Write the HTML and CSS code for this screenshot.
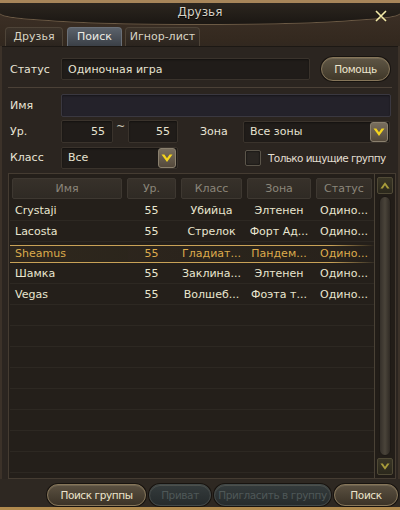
FILE: index.html
```html
<!DOCTYPE html>
<html lang="ru">
<head>
    <meta charset="UTF-8">
    <title>Друзья</title>
    <link rel="stylesheet" href="styles.css">
</head>
<body>
    <div class="window">
        <div class="titlebar"><span class="title">Друзья</span></div>
        <button class="close" title="Закрыть">
            <svg width="12" height="12" viewBox="0 0 12 12"><path d="M1 1 L11 11 M11 1 L1 11" stroke="#f2eaa8" stroke-width="1.6"/></svg>
        </button>

        <div class="tabs">
            <div class="tab tab-friends">Друзья</div>
            <div class="tab tab-search active">Поиск</div>
            <div class="tab tab-ignore">Игнор-лист</div>
        </div>

        <div class="panel">
            <div class="status-row">
                <span class="label">Статус</span>
                <div class="field status-field">Одиночная игра</div>
                <button class="pill help-btn">Помощь</button>
            </div>

            <div class="divider"></div>

            <div class="form">
                <div class="form-row">
                    <span class="label">Имя</span>
                    <div class="field name-field"></div>
                </div>
                <div class="form-row">
                    <span class="label">Ур.</span>
                    <div class="field num num-from">55</div>
                    <span class="tilde">~</span>
                    <div class="field num num-to">55</div>
                    <span class="label zone-label">Зона</span>
                    <div class="field select zone-select">
                        <span>Все зоны</span>
                        <span class="arrow"><svg width="12" height="10" viewBox="0 0 12 10"><path d="M0.5 1.5 L6 9 L11.5 1.5 L8.6 1.5 L6 5.2 L3.4 1.5 Z" fill="#f4d41e"/></svg></span>
                    </div>
                </div>
                <div class="form-row">
                    <span class="label">Класс</span>
                    <div class="field select class-select">
                        <span>Все</span>
                        <span class="arrow"><svg width="12" height="10" viewBox="0 0 12 10"><path d="M0.5 1.5 L6 9 L11.5 1.5 L8.6 1.5 L6 5.2 L3.4 1.5 Z" fill="#f4d41e"/></svg></span>
                    </div>
                    <label class="check"><span class="box"></span>Только ищущие группу</label>
                </div>
            </div>

            <div class="list">
                <div class="table">
                    <div class="grid thead">
                        <div class="th">Имя</div>
                        <div class="th">Ур.</div>
                        <div class="th">Класс</div>
                        <div class="th">Зона</div>
                        <div class="th">Статус</div>
                    </div>
                    <div class="tbody">
                        <div class="grid row">
                            <div class="name">Crystaji</div><div>55</div><div>Убийца</div><div>Элтенен</div><div>Одино...</div>
                        </div>
                        <div class="grid row">
                            <div class="name">Lacosta</div><div>55</div><div>Стрелок</div><div>Форт Ад...</div><div>Одино...</div>
                        </div>
                        <div class="grid row selected">
                            <div class="name">Sheamus</div><div>55</div><div>Гладиат...</div><div>Пандем...</div><div>Одино...</div>
                        </div>
                        <div class="grid row">
                            <div class="name">Шамка</div><div>55</div><div>Заклина...</div><div>Элтенен</div><div>Одино...</div>
                        </div>
                        <div class="grid row">
                            <div class="name">Vegas</div><div>55</div><div>Волшеб...</div><div>Фоэта т...</div><div>Одино...</div>
                        </div>
                    </div>
                </div>

                <div class="scrollbar">
                    <div class="scroll-btn">
                        <svg width="10" height="9" viewBox="0 0 12 10"><path d="M0.5 8.5 L6 1 L11.5 8.5 L8.6 8.5 L6 4.8 L3.4 8.5 Z" fill="#a89c3a"/></svg>
                    </div>
                    <div class="track"></div>
                    <div class="scroll-btn">
                        <svg width="10" height="9" viewBox="0 0 12 10"><path d="M0.5 1.5 L6 9 L11.5 1.5 L8.6 1.5 L6 5.2 L3.4 1.5 Z" fill="#a89c3a"/></svg>
                    </div>
                </div>
            </div>
        </div>

        <!-- Bottom buttons -->
        <div class="footer">
            <button class="pill btn-party">Поиск группы</button>
            <button class="pill disabled btn-private">Приват</button>
            <button class="pill disabled btn-invite">Пригласить в группу</button>
            <button class="pill btn-search">Поиск</button>
        </div>
    </div>
</body>
</html>
```

FILE: styles.css
```css
* {
    box-sizing: border-box;
}

body {
    margin: 0;
    background: #1a1512;
    font-family: "DejaVu Sans", "Noto Sans", sans-serif;
    font-size: 11px;
    color: #e6e2d0;
}

.window {
    position: relative;
    width: 400px;
    height: 510px;
    display: flex;
    flex-direction: column;
    background: linear-gradient(180deg, #3f3228 0%, #34291f 40px, #2b2520 60px);
}

.titlebar {
    height: 24px;
    border-top: 3px solid #a8865a;
    border-radius: 0 0 200px 200px / 0 0 11px 11px;
    background: linear-gradient(180deg, #2c261f, #1b1713);
    box-shadow: 0 1px 0 #6b5a45;
    text-align: center;
}

.title {
    display: inline-block;
    margin-top: 2px;
    font-size: 12px;
    color: #d6d2c6;
    text-shadow: 0 1px 1px #000;
}

.close {
    position: absolute;
    top: 9px;
    right: 12px;
    width: 14px;
    height: 14px;
    padding: 1px;
    border: none;
    background: none;
    cursor: pointer;
}

.tabs {
    height: 22px;
    padding: 3px 0 0 5px;
    display: flex;
    gap: 4px;
}

.tab {
    height: 19px;
    line-height: 18px;
    text-align: center;
    font-size: 11px;
    color: #d8d4c4;
    border: 1px solid #4e4438;
    border-bottom: none;
    border-radius: 4px 4px 0 0;
    background: linear-gradient(180deg, #3b3229, #2b241e);
}

.tab-friends { width: 58px; }
.tab-search { width: 55px; margin-right: -1px; }
.tab-ignore { width: 75px; }

.tab.active {
    color: #ecebe4;
    border-color: #6a7078;
    background: linear-gradient(180deg, #5b626b, #3b4047);
}

.panel {
    height: 433px;
    padding: 0 8px;
    background: #2b2520;
    box-shadow: inset 2px 0 0 #3c3229, inset -2px 0 0 #3c3229, inset 0 1px 0 #1c1814;
}

.label {
    width: 53px;
    padding-left: 2px;
    flex-shrink: 0;
    color: #e8e4d6;
}

.status-row {
    margin-top: 11px;
    height: 24px;
    display: flex;
    align-items: center;
}

.field {
    height: 23px;
    display: flex;
    align-items: center;
    padding: 0 6px;
    background: #201c19;
    border: 1px solid #3a332c;
    border-radius: 2px;
    box-shadow: inset 0 1px 2px rgba(0, 0, 0, 0.4);
}

.status-field {
    width: 249px;
    height: 22px;
}

.pill {
    height: 22px;
    padding: 0;
    font-family: inherit;
    font-size: 10.5px;
    letter-spacing: -0.4px;
    white-space: nowrap;
    color: #ede5cd;
    border: 1px solid #86765a;
    border-radius: 11px;
    background: linear-gradient(180deg, #5b5141, #3b3327);
    box-shadow: 0 0 0 1px #17130f, inset 0 1px 0 rgba(255, 240, 200, 0.12);
    cursor: pointer;
}

.help-btn {
    width: 69px;
    height: 24px;
    margin-left: 11px;
    border-radius: 12px;
    background: linear-gradient(180deg, #5f5645, #403829);
}

.divider {
    height: 1px;
    margin-top: 6px;
    background: #4b4137;
}

.form {
    margin-top: 6px;
    display: flex;
    flex-direction: column;
    gap: 3px;
}

.form-row {
    height: 23px;
    display: flex;
    align-items: center;
}

.name-field {
    flex: 1;
    margin-right: 1px;
    background: #24222a;
    border-color: #3a3840;
}

.num {
    justify-content: flex-end;
    padding-right: 7px;
}

.num-from { width: 52px; }
.num-to { width: 50px; }

.tilde {
    width: 15px;
    text-align: center;
    align-self: flex-start;
    color: #cfcabb;
}

.zone-label {
    width: 43px;
    margin-left: 22px;
    padding-left: 0;
}

.select {
    justify-content: space-between;
    padding: 0 1px 0 6px;
    height: 22px;
}

.zone-select { width: 147px; }
.class-select { width: 117px; }

.arrow {
    width: 18px;
    height: 20px;
    display: flex;
    align-items: center;
    justify-content: center;
    border: 1px solid #8a806e;
    border-radius: 3px;
    background: linear-gradient(180deg, #786e5e, #54493b);
}

.check {
    margin-left: 67px;
    display: flex;
    align-items: center;
    gap: 7px;
    font-size: 10.5px;
    letter-spacing: -0.6px;
    white-space: nowrap;
    color: #e2ded0;
}

.box {
    width: 16px;
    height: 16px;
    flex-shrink: 0;
    border: 1px solid #5b554a;
    border-radius: 2px;
    background: #2a2622;
    box-shadow: inset 0 0 2px #000;
}

.list {
    height: 306px;
    margin: 4px -4px 0 0;
    display: flex;
    border: 1px solid #453c32;
    background: #241f1a;
}

.table {
    flex: 1;
    padding: 4px 0 0 3px;
}

.grid {
    display: grid;
    grid-template-columns: 110px 49px 61px 64px 56px;
    column-gap: 5px;
}

.thead {
    height: 20px;
    margin-bottom: 2px;
}

.th {
    line-height: 19px;
    text-align: center;
    color: #8b867a;
    border: 1px solid #3e3831;
    border-radius: 2px;
    background: linear-gradient(180deg, #37312a, #2f2a24);
}

.tbody {
    height: 275px;
    margin-left: -2px;
    background: repeating-linear-gradient(180deg, transparent 0, transparent 20px, #2d2822 20px, #2d2822 21px);
}

.row {
    height: 21px;
    line-height: 20px;
    padding: 1px 0 0 2px;
    text-align: center;
    color: #e9e6cf;
    white-space: nowrap;
}

.row .name {
    text-align: left;
    padding-left: 3px;
}

.row.selected {
    color: #dcab4c;
    line-height: 16px;
    padding-top: 0;
    border-style: solid;
    border-width: 1px 0;
    border-image: linear-gradient(90deg, #c9a257 0%, #c9a257 88%, rgba(201, 162, 87, 0) 100%) 1;
    background: linear-gradient(90deg, rgba(120, 96, 50, 0.12), rgba(120, 96, 50, 0.05) 90%, transparent);
    margin-top: 3px;
    height: 18px;
}

.scrollbar {
    width: 21px;
    display: flex;
    flex-direction: column;
    align-items: center;
    padding: 3px 0 3px;
    border-left: 1px solid #4a4236;
    background: #221d18;
}

.scroll-btn {
    width: 16px;
    height: 17px;
    display: flex;
    align-items: center;
    justify-content: center;
    border: 1px solid #504a36;
    border-radius: 2px;
    background: linear-gradient(180deg, #3a3626, #2b281c);
}

.track {
    flex: 1;
    width: 12px;
    margin: 2px 0;
    border-radius: 6px;
    background: linear-gradient(90deg, #35302a, #4a443a 50%, #2f2a24);
    border: 1px solid #1d1915;
}

.footer {
    height: 31px;
    padding: 5px 2px 0 0;
    display: flex;
    justify-content: flex-end;
    gap: 3px;
    background: #2e2822;
    border-bottom: 3px solid #b08a4e;
}

.btn-party { width: 99px; }
.btn-private { width: 62px; }
.btn-invite { width: 117px; }
.btn-search { width: 64px; }

.pill.disabled {
    color: #4f5858;
    border-color: #424949;
    background: linear-gradient(180deg, #343b3c, #262b2c);
    cursor: default;
}
```
